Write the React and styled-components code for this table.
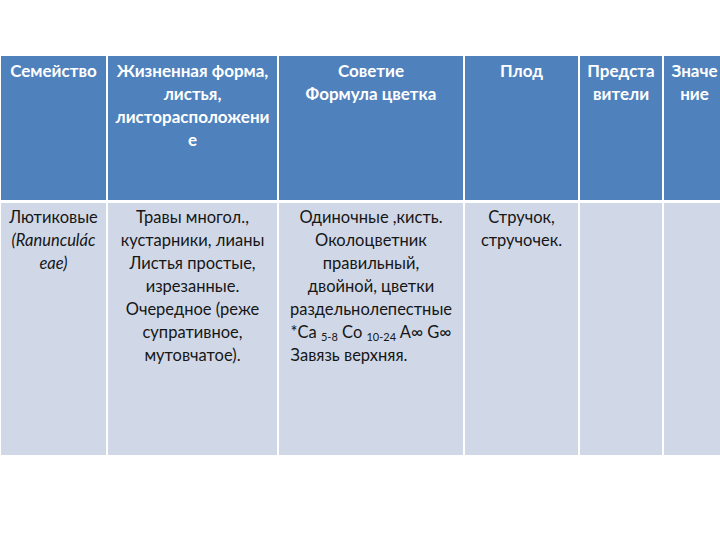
import React from 'react';
import styled, { createGlobalStyle } from 'styled-components';

const GlobalStyle = createGlobalStyle`
  html, body {
    margin: 0;
    padding: 0;
    background: #ffffff;
  }
  body {
    font-family: Lato, "Liberation Sans", sans-serif;
  }
`;

const Page = styled.div`
  width: 720px;
  height: 540px;
  padding-top: 56px;
  box-sizing: border-box;
  background: #ffffff;
`;

const Table = styled.div`
  display: grid;
  grid-template-columns: 105px 169px 184px 113px 82px 61px;
  grid-template-rows: 144px 252px;
  column-gap: 2px;
  row-gap: 3px;
  padding-left: 1px;
  background: #ffffff;
`;

const Cell = styled.div`
  background: ${({ $head }) => ($head ? '#4f81bd' : '#d0d8e8')};
  color: ${({ $head }) => ($head ? '#ffffff' : '#161616')};
  font-weight: ${({ $head }) => ($head ? 700 : 400)};
  font-size: ${({ $head }) => ($head ? '17px' : '16.5px')};
  line-height: 23px;
  text-align: center;
  padding: ${({ $head }) => ($head ? '3px 0' : '3px 0')};
  box-sizing: border-box;
  overflow: hidden;
`;

const Line = styled.div`
  white-space: nowrap;
  margin-right: ${({ $shift }) => ($shift ? `${$shift}px` : '0')};
`;

const Latin = styled.div`
  font-style: italic;
  white-space: nowrap;
`;

const Sub = styled.sub`
  font-size: 11px;
  vertical-align: -3px;
  line-height: 0;
`;

const headers = [
  ['Семейство'],
  ['Жизненная форма,', 'листья,', 'листорасположени', 'е'],
  ['Советие', 'Формула цветка'],
  ['Плод'],
  ['Предста', 'вители'],
  ['Значе', 'ние'],
];

const lifeForm = [
  'Травы многол.,',
  'кустарники, лианы',
  'Листья простые,',
  'изрезанные.',
  'Очередное (реже',
  'супративное,',
  'мутовчатое).',
];

const flower = [
  'Одиночные ,кисть.',
  'Околоцветник',
  'правильный,',
  'двойной, цветки',
  'раздельнолепестные',
];

export default function App() {
  return (
    <Page>
      <GlobalStyle />
      <Table>
        {headers.map((lines, i) => (
          <Cell $head key={i}>
            {lines.map((l) => (
              <Line key={l}>{l}</Line>
            ))}
          </Cell>
        ))}

        <Cell>
          <Line>Лютиковые</Line>
          <Latin>(Ranunculác</Latin>
          <Latin>eae)</Latin>
        </Cell>
        <Cell>
          {lifeForm.map((l) => (
            <Line key={l}>{l}</Line>
          ))}
        </Cell>
        <Cell>
          {flower.map((l) => (
            <Line key={l}>{l}</Line>
          ))}
          <Line>
            *Ca <Sub>5-8</Sub> Co <Sub>10-24</Sub> A∞ G∞
          </Line>
          <Line $shift={44}>Завязь верхняя.</Line>
        </Cell>
        <Cell>
          <Line>Стручок,</Line>
          <Line>стручочек.</Line>
        </Cell>
        <Cell />
        <Cell />
      </Table>
    </Page>
  );
}
